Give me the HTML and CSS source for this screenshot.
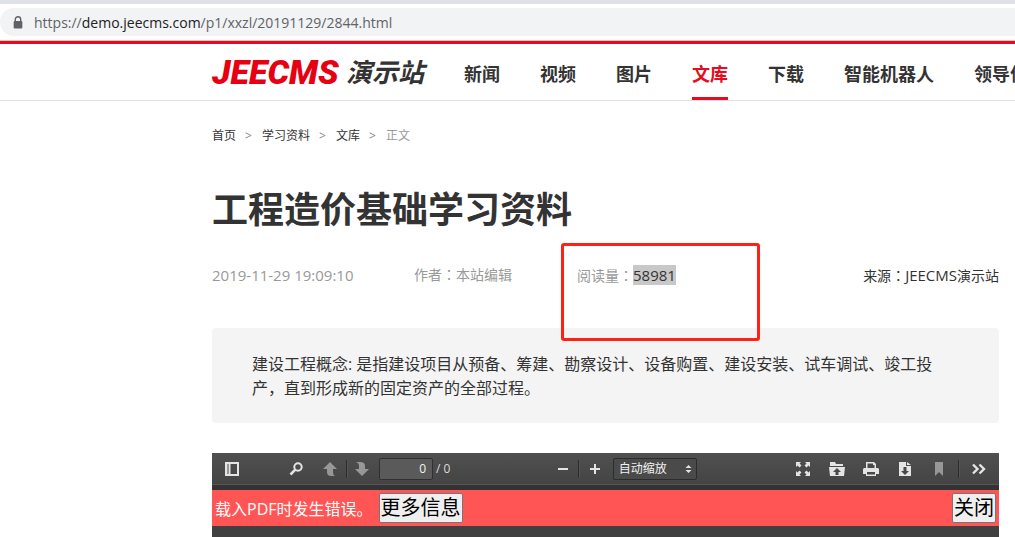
FILE: index.html
```html
<!DOCTYPE html>
<html lang="zh-CN">
<head>
    <meta charset="UTF-8">
    <meta name="viewport" content="width=device-width, initial-scale=1.0">
    <title>工程造价基础学习资料</title>
    <link rel="stylesheet" href="styles.css">
</head>
<body>
    <div class="browser-bar">
        <div class="address">
            <svg class="lock" viewBox="0 0 10 12">
                <path d="M2.5 5V3.2a2.5 2.5 0 0 1 5 0V5" fill="none" stroke="#5f6368" stroke-width="1.3"/>
                <rect x="1" y="4.6" width="8" height="7" rx="1" fill="#5f6368"/>
            </svg>
            <span class="url">https://<b>demo.jeecms.com</b>/p1/xxzl/20191129/2844.html</span>
        </div>
    </div>
    <header class="header">
        <a href="#" class="logo"><span class="logo-en">JEECMS</span><span class="logo-cn">演示站</span></a>
        <nav class="nav">
            <a href="#">新闻</a>
            <a href="#">视频</a>
            <a href="#">图片</a>
            <a href="#" class="active">文库</a>
            <a href="#">下载</a>
            <a href="#">智能机器人</a>
            <a href="#">领导信箱</a>
        </nav>
    </header>
    <main class="content">
        <div class="crumbs">
            <a href="#">首页</a><i>&gt;</i><a href="#">学习资料</a><i>&gt;</i><a href="#">文库</a><i>&gt;</i><span>正文</span>
        </div>
        <h1>工程造价基础学习资料</h1>
        <div class="meta">
            <span class="date">2019-11-29 19:09:10</span>
            <span>作者<span class="punct" lang="zh-TW">：</span>本站编辑</span>
            <span class="views">阅读量<span class="punct" lang="zh-TW">：</span><mark>58981</mark><span class="frame"></span></span>
            <span class="source">来源<span class="punct" lang="zh-TW">：</span><span class="site">JEECMS</span>演示站</span>
        </div>
        <p class="summary">建设工程概念: 是指建设项目从预备、筹建、勘察设计、设备购置、建设安装、试车调试、竣工投产，直到形成新的固定资产的全部过程。</p>
        <div class="viewer">
            <div class="toolbar">
                <div class="group group-left">
                    <button type="button" class="sidebar-toggle" aria-label="切换侧栏">
                        <svg viewBox="0 0 16 16"><path d="M1 1h14v14H1zM3 3v10h2V3zM6.500 3v10H13V3z" fill-rule="evenodd"/><path d="M3 3h2v10H3z" opacity=".5"/></svg>
                    </button>
                    <button type="button" class="find" aria-label="查找">
                        <svg viewBox="0 0 16 16"><circle cx="10" cy="6" r="3.700" fill="none" stroke="#e4e4e4" stroke-width="2"/><path d="M7.300 8.700L2.500 13.500" fill="none" stroke="#e4e4e4" stroke-width="2.600"/></svg>
                    </button>
                    <button type="button" aria-label="上一页" disabled>
                        <svg viewBox="0 0 16 16"><path d="M8 1l7 7h-4v3q0 3 2 4H9q-4 0-4-4V8H1z"/></svg>
                    </button>
                    <span class="separator"></span>
                    <button type="button" class="narrow" aria-label="下一页" disabled>
                        <svg viewBox="0 0 16 16"><path d="M2 1h4q5 0 5 4v3h4l-7 7-7-7h4V5q0-3-3-4z"/></svg>
                    </button>
                    <input type="text" class="page" aria-label="页码" value="0">
                    <span class="total">/ 0</span>
                </div>
                <div class="group group-zoom">
                    <button type="button" class="narrow" aria-label="缩小"><svg viewBox="0 0 16 16"><path d="M3 7h10v2H3z"/></svg></button>
                    <span class="separator"></span>
                    <button type="button" class="narrow" aria-label="放大"><svg viewBox="0 0 16 16"><path d="M7 3h2v4h4v2H9v4H7V9H3V7h4z"/></svg></button>
                    <span class="scale">
                        <select aria-label="缩放"><option>自动缩放</option></select>
                        <svg class="scale-arrows" viewBox="0 0 7 10"><path d="M3.500 1L6.500 4h-6zM3.500 9L.5 6h6z"/></svg>
                    </span>
                </div>
                <div class="group group-right">
                    <button type="button" aria-label="全屏">
                        <svg viewBox="0 0 16 16"><path d="M1 1h5L4.500 2.500l2 2-2 2-2-2L1 6zM15 1v5l-1.500-1.500-2 2-2-2 2-2L10 1zM1 15v-5l1.500 1.500 2-2 2 2-2 2L6 15zM15 15h-5l1.500-1.500-2-2 2-2 2 2L15 10z"/></svg>
                    </button>
                    <button type="button" aria-label="打开">
                        <svg viewBox="0 0 16 16"><path d="M1 1h5l1 2h7v2H1zM0 6h16l-1 9H1zM8 7l-4 4h2.500v3h3v-3H12z" fill-rule="evenodd"/></svg>
                    </button>
                    <button type="button" aria-label="打印">
                        <svg viewBox="0 0 16 16"><path d="M3 1h8l2 2v4h2l1 1v5h-3v2H3v-2H0V8l1-1h2zM4.500 2.500V7h7V4h-1.500V2.500zM4 11v2.500h8V11z" fill-rule="evenodd"/></svg>
                    </button>
                    <button type="button" aria-label="下载">
                        <svg viewBox="0 0 16 16"><path d="M2 1h7v4h5v10H2zM10 1l4 3h-4zM6.500 6v4H4l4 4 4-4H9.500V6z" fill-rule="evenodd"/></svg>
                    </button>
                    <button type="button" aria-label="书签" disabled>
                        <svg viewBox="0 0 16 16"><path d="M4 1h8v14l-4-4-4 4z"/></svg>
                    </button>
                    <span class="separator"></span>
                    <button type="button" aria-label="工具">
                        <svg viewBox="0 0 16 16"><path d="M2 3.500L6.500 8 2 12.500M8.500 3.500L13 8l-4.500 4.500" fill="none" stroke="#e4e4e4" stroke-width="2.400"/></svg>
                    </button>
                </div>
            </div>
            <div class="error">
                <span>载入PDF时发生错误。</span>
                <button type="button">更多信息</button>
                <button type="button" class="close">关闭</button>
            </div>
        </div>
    </main>
</body>
</html>
```

FILE: styles.css
```css
* {
    margin: 0;
    padding: 0;
    box-sizing: border-box;
}
body {
    font-family: "Open Sans", "Noto Sans CJK SC", sans-serif;
    font-size: 14px;
    color: #333;
    background: #fff;
    min-height: 100vh;
    display: flex;
    flex-direction: column;
    overflow: hidden;
}
a {
    color: inherit;
    text-decoration: none;
}
button,
input,
select {
    font-family: inherit;
}

/* address bar */
.browser-bar {
    border-top: 4px solid #dee1e6;
    border-bottom: 1px solid #c8cacc;
    padding: 4px 0;
}
.address {
    display: flex;
    align-items: center;
    gap: 10px;
    height: 28px;
    padding-left: 12px;
    background: #f1f3f4;
    border-radius: 14px 0 0 14px;
    font-size: 14px;
    color: #5f6368;
}
.address b {
    font-weight: 400;
    color: #202124;
}
.lock {
    width: 12px;
    height: 13px;
}

/* site header */
.header {
    display: flex;
    gap: 40px;
    height: 60px;
    padding-left: 212px;
    border-top: 3px solid #e60b20;
    border-bottom: 1px solid #e1e1e1;
    white-space: nowrap;
}
.logo {
    display: flex;
    flex: 0 0 212px;
    align-items: center;
    justify-content: space-between;
    font-style: italic;
    line-height: 56px;
}
.logo-en {
    font-family: Roboto, "Open Sans", sans-serif;
    font-size: 34px;
    font-weight: 900;
    color: #e60012;
}
.logo-cn {
    font-size: 26px;
    font-weight: 700;
}
.nav {
    display: flex;
    gap: 40px;
    font-size: 18px;
    font-weight: 700;
    line-height: 60px;
}
.nav a {
    height: 56px;
}
.nav .active {
    color: #e60b20;
    border-bottom: 3px solid #e60b20;
}

/* article */
.content {
    flex: 1;
    display: flex;
    flex-direction: column;
    padding: 25px 16px 0 212px;
}
.crumbs {
    display: flex;
    gap: 9px;
    font-size: 12px;
    line-height: 20px;
}
.crumbs i {
    width: 8px;
    font-style: normal;
    color: #888;
}
.crumbs span {
    color: #999;
}
h1 {
    margin-top: 36px;
    font-size: 36px;
    line-height: 56px;
}
.meta {
    display: grid;
    grid-template-columns: 202px 163px auto 1fr;
    height: 20px;
    margin-top: 27px;
    line-height: 20px;
    color: #999;
    white-space: nowrap;
}
.punct {
    font-family: "Noto Sans CJK TC", sans-serif;
    line-height: 1;
}
.date,
.site,
.views mark {
    font-size: 15px;
}
.views {
    position: relative;
}
.views mark {
    color: #333;
    background: #c8c8c8;
}
.frame {
    position: absolute;
    top: -22px;
    left: -16px;
    width: 199px;
    height: 98px;
    border: 3px solid #ff2114;
    border-radius: 3px;
}
.source {
    color: #333;
    text-align: right;
}
.summary {
    margin-top: 43px;
    padding: 24px 40px 23px;
    background: #f4f4f4;
    border-radius: 4px;
    font-size: 16px;
    line-height: 24px;
}

/* pdf viewer */
.viewer {
    flex: 1;
    margin-top: 30px;
    background: #404040;
}
.toolbar {
    display: flex;
    justify-content: space-between;
    height: 32px;
    background: linear-gradient(#505050, #444);
    border-bottom: 1px solid #565656;
}
.group {
    display: flex;
    align-items: center;
}
.group-left {
    padding: 0 8px 0 4px;
}
.group-right {
    gap: 2px;
    padding-right: 4px;
}
.toolbar button {
    display: flex;
    align-items: center;
    justify-content: center;
    width: 32px;
    height: 28px;
    border: none;
    background: none;
}
.toolbar button:disabled {
    opacity: .5;
}
.toolbar .narrow {
    width: 28px;
}
.toolbar svg {
    width: 16px;
    height: 16px;
    fill: #e4e4e4;
}
.toolbar .sidebar-toggle {
    margin-right: 32px;
}
.find {
    margin-right: 2px;
}
.separator {
    width: 2px;
    height: 18px;
    background: #2c2c2c;
    border-right: 1px solid #555;
}
.group-zoom .separator,
.group-right .separator {
    margin: 0 1px;
}
.page {
    width: 54px;
    height: 22px;
    margin-left: 3px;
    padding: 0 6px;
    background: #5a5a5a;
    border: 1px solid #303030;
    border-radius: 2px;
    color: #f2f2f2;
    font-size: 12px;
    text-align: right;
}
.total {
    margin-left: 3px;
    font-size: 12px;
    color: #d9d9d9;
}
.scale {
    position: relative;
    margin-left: 4px;
}
.scale select {
    display: block;
    width: 84px;
    height: 22px;
    padding-left: 5px;
    appearance: none;
    background: #4a4a4a;
    border: 1px solid #2c2c2c;
    border-radius: 2px;
    color: #f2f2f2;
    font-size: 12px;
}
.toolbar .scale-arrows {
    position: absolute;
    top: 6px;
    right: 5px;
    width: 7px;
    height: 10px;
    pointer-events: none;
}
.error {
    display: flex;
    align-items: center;
    gap: 6px;
    height: 41px;
    padding: 0 3px;
    border-top: 5px solid #333;
    background: #f55;
    color: #fff;
    font-size: 16px;
}
.error button {
    height: 30px;
    padding: 0 1px;
    background: #efefef;
    border: 1px solid #767676;
    border-radius: 2px;
    color: #000;
    font-size: 20px;
    line-height: 28px;
}
.error .close {
    margin-left: auto;
}
```
